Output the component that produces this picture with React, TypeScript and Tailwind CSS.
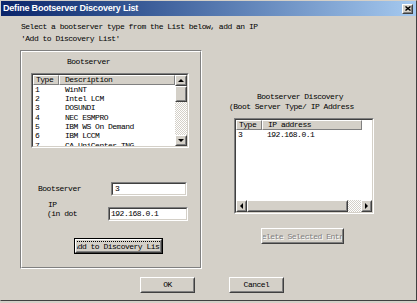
import type { ReactNode } from 'react';

const MONO = "font-['Liberation_Mono',monospace] text-[8px] tracking-[-0.5px] text-black";

const BOOTSERVERS: Array<{ type: string; desc: string }> = [
  { type: '1', desc: 'WinNT' },
  { type: '2', desc: 'Intel LCM' },
  { type: '3', desc: 'DOSUNDI' },
  { type: '4', desc: 'NEC ESMPRO' },
  { type: '5', desc: 'IBM WS On Demand' },
  { type: '6', desc: 'IBM LCCM' },
  { type: '7', desc: 'CA UniCenter TNG' },
];

function Sunken({ className, children }: { className: string; children?: ReactNode }): JSX.Element {
  return (
    <div
      className={`border border-t-[#808080] border-l-[#808080] border-r-white border-b-white ${className}`}
    >
      <div className="h-full w-full overflow-hidden border border-t-[#404040] border-l-[#404040] border-r-[#d4d0c8] border-b-[#d4d0c8] bg-white leading-[10px]">
        {children}
      </div>
    </div>
  );
}

function Raised({ className, children }: { className: string; children?: ReactNode }): JSX.Element {
  return (
    <div
      className={`border border-t-white border-l-white border-r-[#404040] border-b-[#404040] bg-[#d4d0c8] ${className}`}
    >
      <div className="flex h-full w-full items-center justify-center overflow-hidden border border-t-[#d4d0c8] border-l-[#d4d0c8] border-r-[#808080] border-b-[#808080]">
        {children}
      </div>
    </div>
  );
}

function Arrow({ dir }: { dir: 'up' | 'down' | 'left' | 'right' }): JSX.Element {
  const cls =
    dir === 'up'
      ? 'border-x-[3px] border-x-transparent border-b-[3px] border-b-black'
      : dir === 'down'
      ? 'border-x-[3px] border-x-transparent border-t-[3px] border-t-black'
      : dir === 'left'
      ? 'border-y-[3px] border-y-transparent border-r-[3px] border-r-black'
      : 'border-y-[3px] border-y-transparent border-l-[3px] border-l-black';
  return <span className={`h-0 w-0 ${cls}`} />;
}

function HeaderCell({ className, children }: { className: string; children?: ReactNode }): JSX.Element {
  return (
    <div
      className={`h-full border border-t-white border-l-white border-r-[#808080] border-b-[#808080] bg-[#d4d0c8] leading-[8px] whitespace-nowrap ${className}`}
    >
      {children}
    </div>
  );
}

function BootserverList(): JSX.Element {
  return (
    <Sunken className="ml-[9px] mt-[6px] h-[75px] w-[158px]">
      <div className="flex h-full">
        <div className={`flex-1 overflow-hidden ${MONO}`}>
          <div className="flex h-[10px]">
            <HeaderCell className="w-[26px] pl-[2px]">Type</HeaderCell>
            <HeaderCell className="flex-1 pl-[5px]">Description</HeaderCell>
          </div>
          {BOOTSERVERS.map((b) => (
            <div key={b.type} className="flex h-[9.33px] items-center whitespace-nowrap">
              <span className="w-[26px] pl-[2px]">{b.type}</span>
              <span className="pl-[6px]">{b.desc}</span>
            </div>
          ))}
        </div>
        <div className="flex w-[12px] flex-col bg-[repeating-conic-gradient(#ffffff_0_25%,#d4d0c8_0_50%)] bg-size-[2px_2px]">
          <Raised className="h-[11px] w-full">
            <Arrow dir="up" />
          </Raised>
          <Raised className="h-[16px] w-full" />
          <div className="flex-1" />
          <Raised className="h-[11px] w-full">
            <Arrow dir="down" />
          </Raised>
        </div>
      </div>
    </Sunken>
  );
}

function DiscoveryList(): JSX.Element {
  return (
    <Sunken className="ml-[5px] mt-[6px] h-[96px] w-[140px]">
      <div className="flex h-full flex-col">
        <div className={`flex-1 overflow-hidden ${MONO}`}>
          <div className="flex h-[10px]">
            <HeaderCell className="w-[26px] pl-[2px]">Type</HeaderCell>
            <HeaderCell className="w-[100px] pl-[5px]">IP address</HeaderCell>
          </div>
          <div className="flex h-[9.5px] items-center whitespace-nowrap">
            <span className="w-[26px] pl-[2px]">3</span>
            <span className="pl-[5px]">192.168.0.1</span>
          </div>
        </div>
        <div className="flex h-[12px] bg-[repeating-conic-gradient(#ffffff_0_25%,#d4d0c8_0_50%)] bg-size-[2px_2px]">
          <Raised className="h-full w-[11px]">
            <Arrow dir="left" />
          </Raised>
          <Raised className="h-full w-[101px]" />
          <div className="flex-1" />
          <Raised className="h-full w-[11px]">
            <Arrow dir="right" />
          </Raised>
        </div>
      </div>
    </Sunken>
  );
}

function GroupBox({ children }: { children: ReactNode }): JSX.Element {
  return (
    <div className="ml-[19px] h-[219px] w-[182px] border border-t-[#808080] border-l-[#808080] border-r-white border-b-white">
      <div className="flex h-full flex-col border border-t-white border-l-white border-r-[#808080] border-b-[#808080]">
        {children}
      </div>
    </div>
  );
}

export default function App(): JSX.Element {
  return (
    <div className="h-[303px] w-[417px] bg-[#d4d0c8]">
      <div className="flex h-[301px] w-[417px] flex-col border border-t-[#d4d0c8] border-l-[#d4d0c8] border-r-[#404040] border-b-[#404040] bg-[#d4d0c8]">
        <div className="flex h-[15px] items-center justify-between bg-linear-to-r from-[#0a246a] to-[#a6caf0] pl-[2px] pr-[3px]">
          <span className="font-['Liberation_Sans',sans-serif] text-[9px] font-bold tracking-[-0.2px] whitespace-nowrap text-white">
            Define Bootserver Discovery List
          </span>
          <Raised className="h-[10px] w-[11px]">
            <svg width="6" height="5" viewBox="0 0 6 5" aria-hidden>
              <path d="M0.5 0.5 L5.5 4.5 M5.5 0.5 L0.5 4.5" stroke="#000" strokeWidth="1.4" />
            </svg>
          </Raised>
        </div>

        <div className={`pl-[20px] pt-[5px] leading-[12px] whitespace-nowrap ${MONO}`}>
          <p>Select a bootserver type from the List below, add an IP</p>
          <p>'Add to Discovery List'</p>
        </div>

        <div className="mt-[5px] flex h-[219px]">
          <GroupBox>
            <p className={`mt-[5px] pl-[45px] leading-[10px] ${MONO}`}>Bootserver</p>
            <BootserverList />

            <div className="mt-[34px] flex h-[14px] items-center">
              <span className={`ml-[16px] w-[73px] leading-[10px] ${MONO}`}>Bootserver</span>
              <Sunken className="h-[14px] w-[76px]">
                <p className={`pl-[2px] leading-[10px] ${MONO}`}>3</p>
              </Sunken>
            </div>

            <div className="mt-[4px] flex items-start">
              <div className={`ml-[25px] w-[61px] leading-[9px] ${MONO}`}>
                <p className="pl-[1px]">IP</p>
                <p>(in dot</p>
              </div>
              <Sunken className="mt-[7px] h-[14px] w-[80px]">
                <p className={`pl-[1px] leading-[10px] ${MONO}`}>192.168.0.1</p>
              </Sunken>
            </div>

            <div className="ml-[52px] mt-[17px] h-[16px] w-[89px] border border-black">
              <Raised className="h-full w-full">
                <span className="flex h-full w-full items-center justify-center overflow-hidden">
                  <span className={`border border-dotted border-black px-[1px] leading-[9px] whitespace-nowrap ${MONO}`}>
                    Add to Discovery List
                  </span>
                </span>
              </Raised>
            </div>
          </GroupBox>

          <div className="ml-[27px] flex w-[146px] flex-col">
            <p className={`mt-[42px] pl-[28px] leading-[10px] whitespace-nowrap ${MONO}`}>
              Bootserver Discovery
            </p>
            <p className={`leading-[10px] whitespace-nowrap ${MONO}`}>(Boot Server Type/ IP Address</p>
            <DiscoveryList />
            <Raised className="ml-[32px] mt-[14px] h-[16px] w-[83px]">
              <span
                className={`whitespace-nowrap leading-[9px] text-[#808080]! [text-shadow:1px_1px_0_#ffffff] ${MONO}`}
              >
                Delete Selected Entry
              </span>
            </Raised>
          </div>
        </div>

        <div className="mt-[8px] flex">
          <Raised className="ml-[139px] h-[16px] w-[55px]">
            <span className={`leading-[10px] ${MONO}`}>OK</span>
          </Raised>
          <Raised className="ml-[34px] h-[16px] w-[55px]">
            <span className={`leading-[10px] ${MONO}`}>Cancel</span>
          </Raised>
        </div>
      </div>
    </div>
  );
}
